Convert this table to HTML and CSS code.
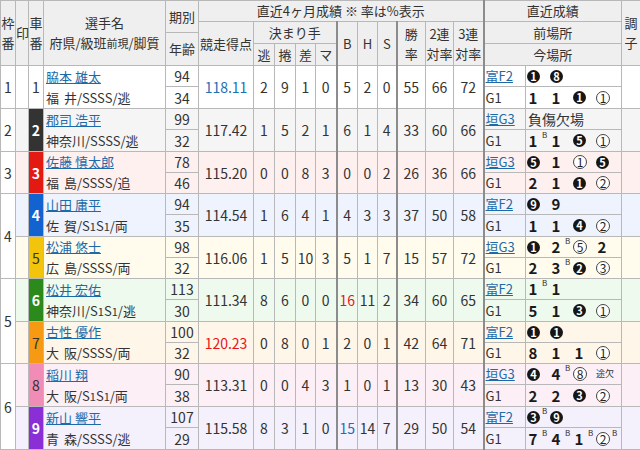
FILE: index.html
```html
<!DOCTYPE html>
<html lang="ja">
<head>
<meta charset="utf-8">
<title>出走表</title>
<link rel="stylesheet" href="styles.css">
</head>
<body>
<table class="race">
<colgroup>
<col class="w15"><col class="w13"><col class="w15"><col class="w122"><col class="w33"><col class="w55">
<col class="w21"><col class="w21"><col class="w20"><col class="w21">
<col class="w21"><col class="w20"><col class="w19">
<col class="w29"><col class="w28"><col class="w30">
<col class="w42"><col class="w96"><col class="w19">
</colgroup>
<thead>
<tr class="h1">
  <th rowspan="3">枠<br>番</th>
  <th rowspan="3">印</th>
  <th rowspan="3">車<br>番</th>
  <th rowspan="3" class="hname">選手名<br>府県/級班<span class="sm">前現</span>/脚質</th>
  <th rowspan="3" class="kb"><div class="kb1">期別</div><div class="kb2">年齢</div></th>
  <th colspan="11">直近4ヶ月成績 ※ 率は%表示</th>
  <th colspan="2" class="tl">直近成績</th>
  <th rowspan="3">調<br>子</th>
</tr>
<tr class="h2">
  <th rowspan="2">競走得点</th>
  <th colspan="4">決まり手</th>
  <th rowspan="2" class="tl">B</th>
  <th rowspan="2">H</th>
  <th rowspan="2">S</th>
  <th rowspan="2" class="tl">勝<br>率</th>
  <th rowspan="2">2連<br>対率</th>
  <th rowspan="2">3連<br>対率</th>
  <th colspan="2" class="tl">前場所</th>
</tr>
<tr class="h3">
  <th>逃</th><th>捲</th><th>差</th><th>マ</th>
  <th colspan="2" class="tl">今場所</th>
</tr>
</thead>
<tbody>
<!-- 1 -->
<tr class="r1 gtop ha">
  <td rowspan="2" class="waku">1</td>
  <td rowspan="2"></td>
  <td rowspan="2" class="car c1">1</td>
  <td rowspan="2" class="name"><div class="nm"><a href="#">脇本 雄太</a></div><div class="info">福 井/SSSS/逃</div></td>
  <td class="age">94</td>
  <td rowspan="2" class="score blue">118.11</td>
  <td rowspan="2" class="num">2</td><td rowspan="2" class="num">9</td><td rowspan="2" class="num">1</td><td rowspan="2" class="num">0</td>
  <td rowspan="2" class="num tl">5</td><td rowspan="2" class="num">2</td><td rowspan="2" class="num">0</td>
  <td rowspan="2" class="num tl">55</td><td rowspan="2" class="num">66</td><td rowspan="2" class="num">72</td>
  <td class="venue tl"><a href="#">富F2</a></td>
  <td class="res"><div class="slots"><span class="sl"><span class="cb">1</span></span><span class="sl"><span class="cb">8</span></span></div></td>
  <td rowspan="2"></td>
</tr>
<tr class="r1 hb">
  <td class="age">34</td>
  <td class="venue tl">G1</td>
  <td class="res"><div class="slots"><span class="sl"><span class="pn">1</span></span><span class="sl"><span class="pn">1</span></span><span class="sl"><span class="cb">1</span></span><span class="sl"><span class="cw">1</span></span></div></td>
</tr>
<!-- 2 -->
<tr class="r2 gtop ha">
  <td rowspan="2" class="waku">2</td>
  <td rowspan="2"></td>
  <td rowspan="2" class="car c2">2</td>
  <td rowspan="2" class="name"><div class="nm"><a href="#">郡司 浩平</a></div><div class="info">神奈川/SSSS/逃</div></td>
  <td class="age">99</td>
  <td rowspan="2" class="score">117.42</td>
  <td rowspan="2" class="num">1</td><td rowspan="2" class="num">5</td><td rowspan="2" class="num">2</td><td rowspan="2" class="num">1</td>
  <td rowspan="2" class="num tl">6</td><td rowspan="2" class="num">1</td><td rowspan="2" class="num">4</td>
  <td rowspan="2" class="num tl">33</td><td rowspan="2" class="num">60</td><td rowspan="2" class="num">66</td>
  <td class="venue tl"><a href="#">垣G3</a></td>
  <td class="res"><div class="note">負傷欠場</div></td>
  <td rowspan="2"></td>
</tr>
<tr class="r2 hb">
  <td class="age">32</td>
  <td class="venue tl">G1</td>
  <td class="res"><div class="slots"><span class="sl"><span class="pn">1</span><sup>B</sup></span><span class="sl"><span class="pn">1</span></span><span class="sl"><span class="cb">5</span></span><span class="sl"><span class="cw">1</span></span></div></td>
</tr>
<!-- 3 -->
<tr class="r3 gtop ha">
  <td rowspan="2" class="waku">3</td>
  <td rowspan="2"></td>
  <td rowspan="2" class="car c3">3</td>
  <td rowspan="2" class="name"><div class="nm"><a href="#">佐藤 慎太郎</a></div><div class="info">福 島/SSSS/追</div></td>
  <td class="age">78</td>
  <td rowspan="2" class="score">115.20</td>
  <td rowspan="2" class="num">0</td><td rowspan="2" class="num">0</td><td rowspan="2" class="num">8</td><td rowspan="2" class="num">3</td>
  <td rowspan="2" class="num tl">0</td><td rowspan="2" class="num">0</td><td rowspan="2" class="num">2</td>
  <td rowspan="2" class="num tl">26</td><td rowspan="2" class="num">36</td><td rowspan="2" class="num">66</td>
  <td class="venue tl"><a href="#">垣G3</a></td>
  <td class="res"><div class="slots"><span class="sl"><span class="cb">5</span></span><span class="sl"><span class="pn">1</span></span><span class="sl"><span class="cw">1</span></span><span class="sl"><span class="cb">5</span></span></div></td>
  <td rowspan="2"></td>
</tr>
<tr class="r3 hs">
  <td class="age">46</td>
  <td class="venue tl">G1</td>
  <td class="res"><div class="slots"><span class="sl"><span class="pn">2</span></span><span class="sl"><span class="pn">1</span></span><span class="sl"><span class="cb">1</span></span><span class="sl"><span class="cw">2</span></span></div></td>
</tr>
<!-- 4 -->
<tr class="r4 gtop ha">
  <td rowspan="4" class="waku">4</td>
  <td rowspan="2"></td>
  <td rowspan="2" class="car c4">4</td>
  <td rowspan="2" class="name"><div class="nm"><a href="#">山田 庸平</a></div><div class="info">佐 賀/S<span class="one">1</span>S<span class="one">1</span>/両</div></td>
  <td class="age">94</td>
  <td rowspan="2" class="score">114.54</td>
  <td rowspan="2" class="num">1</td><td rowspan="2" class="num">6</td><td rowspan="2" class="num">4</td><td rowspan="2" class="num">1</td>
  <td rowspan="2" class="num tl">4</td><td rowspan="2" class="num">3</td><td rowspan="2" class="num">3</td>
  <td rowspan="2" class="num tl">37</td><td rowspan="2" class="num">50</td><td rowspan="2" class="num">58</td>
  <td class="venue tl"><a href="#">富F2</a></td>
  <td class="res"><div class="slots"><span class="sl"><span class="cb">9</span></span><span class="sl"><span class="pn">9</span></span></div></td>
  <td rowspan="2"></td>
</tr>
<tr class="r4 hb">
  <td class="age">35</td>
  <td class="venue tl">G1</td>
  <td class="res"><div class="slots"><span class="sl"><span class="pn">1</span></span><span class="sl"><span class="pn">1</span></span><span class="sl"><span class="cb">4</span></span><span class="sl"><span class="cw">2</span></span></div></td>
</tr>
<!-- 5 -->
<tr class="r5 ha">
  <td rowspan="2"></td>
  <td rowspan="2" class="car c5">5</td>
  <td rowspan="2" class="name"><div class="nm"><a href="#">松浦 悠士</a></div><div class="info">広 島/SSSS/両</div></td>
  <td class="age">98</td>
  <td rowspan="2" class="score">116.06</td>
  <td rowspan="2" class="num">1</td><td rowspan="2" class="num">5</td><td rowspan="2" class="num">10</td><td rowspan="2" class="num">3</td>
  <td rowspan="2" class="num tl">5</td><td rowspan="2" class="num">1</td><td rowspan="2" class="num">7</td>
  <td rowspan="2" class="num tl">15</td><td rowspan="2" class="num">57</td><td rowspan="2" class="num">72</td>
  <td class="venue tl"><a href="#">垣G3</a></td>
  <td class="res"><div class="slots"><span class="sl"><span class="cb">1</span></span><span class="sl"><span class="pn">2</span><sup>B</sup></span><span class="sl"><span class="cw">5</span></span><span class="sl"><span class="pn">2</span></span></div></td>
  <td rowspan="2"></td>
</tr>
<tr class="r5 hs">
  <td class="age">32</td>
  <td class="venue tl">G1</td>
  <td class="res"><div class="slots"><span class="sl"><span class="pn">2</span></span><span class="sl"><span class="pn">3</span><sup>B</sup></span><span class="sl"><span class="cb">2</span></span><span class="sl"><span class="cw">3</span></span></div></td>
</tr>
<!-- 6 -->
<tr class="r6 gtop ha">
  <td rowspan="4" class="waku">5</td>
  <td rowspan="2"></td>
  <td rowspan="2" class="car c6">6</td>
  <td rowspan="2" class="name"><div class="nm"><a href="#">松井 宏佑</a></div><div class="info">神奈川/S<span class="one">1</span>S<span class="one">1</span>/逃</div></td>
  <td class="age">113</td>
  <td rowspan="2" class="score">111.34</td>
  <td rowspan="2" class="num">8</td><td rowspan="2" class="num">6</td><td rowspan="2" class="num">0</td><td rowspan="2" class="num">0</td>
  <td rowspan="2" class="num tl red">16</td><td rowspan="2" class="num">11</td><td rowspan="2" class="num">2</td>
  <td rowspan="2" class="num tl">34</td><td rowspan="2" class="num">60</td><td rowspan="2" class="num">65</td>
  <td class="venue tl"><a href="#">富F2</a></td>
  <td class="res"><div class="slots"><span class="sl"><span class="pn">1</span><sup>B</sup></span><span class="sl"><span class="pn">1</span></span></div></td>
  <td rowspan="2"></td>
</tr>
<tr class="r6 hb">
  <td class="age">30</td>
  <td class="venue tl">G1</td>
  <td class="res"><div class="slots"><span class="sl"><span class="pn">5</span></span><span class="sl"><span class="pn">1</span></span><span class="sl"><span class="cb">3</span></span><span class="sl"><span class="cw">1</span></span></div></td>
</tr>
<!-- 7 -->
<tr class="r7 ha">
  <td rowspan="2"></td>
  <td rowspan="2" class="car c7">7</td>
  <td rowspan="2" class="name"><div class="nm"><a href="#">古性 優作</a></div><div class="info">大 阪/SSSS/両</div></td>
  <td class="age">100</td>
  <td rowspan="2" class="score red">120.23</td>
  <td rowspan="2" class="num">0</td><td rowspan="2" class="num">8</td><td rowspan="2" class="num">0</td><td rowspan="2" class="num">1</td>
  <td rowspan="2" class="num tl">2</td><td rowspan="2" class="num">0</td><td rowspan="2" class="num">1</td>
  <td rowspan="2" class="num tl">42</td><td rowspan="2" class="num">64</td><td rowspan="2" class="num">71</td>
  <td class="venue tl"><a href="#">富F2</a></td>
  <td class="res"><div class="slots"><span class="sl"><span class="cb">1</span></span><span class="sl"><span class="cb">1</span></span></div></td>
  <td rowspan="2"></td>
</tr>
<tr class="r7 hs">
  <td class="age">32</td>
  <td class="venue tl">G1</td>
  <td class="res"><div class="slots"><span class="sl"><span class="pn">8</span></span><span class="sl"><span class="pn">1</span></span><span class="sl"><span class="pn">1</span></span><span class="sl"><span class="cw">1</span></span></div></td>
</tr>
<!-- 8 -->
<tr class="r8 gtop ha">
  <td rowspan="4" class="waku">6</td>
  <td rowspan="2"></td>
  <td rowspan="2" class="car c8">8</td>
  <td rowspan="2" class="name"><div class="nm"><a href="#">稲川 翔</a></div><div class="info">大 阪/S<span class="one">1</span>S<span class="one">1</span>/両</div></td>
  <td class="age">90</td>
  <td rowspan="2" class="score">113.31</td>
  <td rowspan="2" class="num">0</td><td rowspan="2" class="num">0</td><td rowspan="2" class="num">4</td><td rowspan="2" class="num">3</td>
  <td rowspan="2" class="num tl">1</td><td rowspan="2" class="num">0</td><td rowspan="2" class="num">1</td>
  <td rowspan="2" class="num tl">13</td><td rowspan="2" class="num">30</td><td rowspan="2" class="num">43</td>
  <td class="venue tl"><a href="#">垣G3</a></td>
  <td class="res"><div class="slots"><span class="sl"><span class="cb">4</span></span><span class="sl"><span class="pn">4</span><sup>B</sup></span><span class="sl"><span class="cw">8</span></span><span class="sl"><span class="tiny">途欠</span></span></div></td>
  <td rowspan="2"></td>
</tr>
<tr class="r8 hb">
  <td class="age">38</td>
  <td class="venue tl">G1</td>
  <td class="res"><div class="slots"><span class="sl"><span class="pn">2</span></span><span class="sl"><span class="pn">2</span></span><span class="sl"><span class="cb">3</span></span><span class="sl"><span class="cw">2</span></span></div></td>
</tr>
<!-- 9 -->
<tr class="r9 ha">
  <td rowspan="2"></td>
  <td rowspan="2" class="car c9">9</td>
  <td rowspan="2" class="name"><div class="nm"><a href="#">新山 響平</a></div><div class="info">青 森/SSSS/逃</div></td>
  <td class="age">107</td>
  <td rowspan="2" class="score">115.58</td>
  <td rowspan="2" class="num">8</td><td rowspan="2" class="num">3</td><td rowspan="2" class="num">1</td><td rowspan="2" class="num">0</td>
  <td rowspan="2" class="num tl blue">15</td><td rowspan="2" class="num">14</td><td rowspan="2" class="num">7</td>
  <td rowspan="2" class="num tl">29</td><td rowspan="2" class="num">50</td><td rowspan="2" class="num">54</td>
  <td class="venue tl"><a href="#">富F2</a></td>
  <td class="res"><div class="slots"><span class="sl"><span class="cb">3</span><sup>B</sup></span><span class="sl"><span class="cb">9</span></span></div></td>
  <td rowspan="2"></td>
</tr>
<tr class="r9 hb">
  <td class="age">29</td>
  <td class="venue tl">G1</td>
  <td class="res"><div class="slots"><span class="sl"><span class="pn">7</span><sup>B</sup></span><span class="sl"><span class="pn">4</span><sup>B</sup></span><span class="sl"><span class="pn">1</span><sup>B</sup></span><span class="sl"><span class="cw">2</span><sup>B</sup></span></div></td>
</tr>
</tbody>
</table>
</body>
</html>
```
FILE: styles.css
```css
* { box-sizing: border-box; }
html, body { margin: 0; padding: 0; background: #fff; }
body {
  font-family: "Noto Sans CJK JP", "Noto Sans", sans-serif;
  color: #333;
  font-size: 13px;
}
.race {
  border-collapse: collapse;
  table-layout: fixed;
  width: 640px;
}
.w13 { width: 13px; } .w15 { width: 15px; } .w19 { width: 19px; } .w20 { width: 20px; }
.w21 { width: 21px; } .w28 { width: 28px; } .w29 { width: 29px; } .w30 { width: 30px; }
.w33 { width: 33px; } .w42 { width: 42px; } .w55 { width: 55px; } .w96 { width: 96px; }
.w122 { width: 122px; }

.race th, .race td {
  border: 1px solid #b8b8b8;
  padding: 0;
  text-align: center;
  vertical-align: middle;
  font-weight: normal;
  line-height: 18px;
  white-space: nowrap;
}
.race thead th { background: #efefef; color: #333; font-size: 13px; line-height: 20px; }
.h1 { height: 20px; }
.h2 { height: 22px; }
.h3 { height: 22px; }
.sm { font-size: 11px; }
.race th.kb { padding: 0; vertical-align: top; }
.kb1 { height: 32px; line-height: 32px; border-bottom: 1px solid #b8b8b8; }
.kb2 { height: 31px; line-height: 31px; }

.race .tl { border-left: 2px solid #8c8c8c; }

.race tbody tr.ha { height: 21px; }
.race tbody tr.hb { height: 22px; }
.race tbody tr.hs { height: 21px; }
.race tbody tr.gtop td { border-top: 1px solid #8f8f8f; }
.race td { font-size: 14px; }

.r1 { background: #ffffff; }
.r2 { background: #f5f5f5; }
.r3 { background: #fff0f0; }
.r4 { background: #eef3fd; }
.r5 { background: #fffcee; }
.r6 { background: #effaee; }
.r7 { background: #fff6ea; }
.r8 { background: #fcf0f6; }
.r9 { background: #f4f0fc; }

.race td.waku { background: #fff; }

.car { font-size: 14px; }
.c1 { background: #fff; color: #333; }
.c2 { background: #333; color: #fff; }
.c3 { background: #e31a12; color: #fff; }
.c4 { background: #1262cf; color: #fff; }
.c5 { background: #f2c40c; color: #333; }
.c6 { background: #2c8a1c; color: #fff; }
.c7 { background: #f59a12; color: #333; }
.c8 { background: #f08cb6; color: #333; }
.c9 { background: #8a2fd6; color: #fff; }
.race td.c2, .race td.c3, .race td.c4, .race td.c6, .race td.c9 { font-weight: bold; }

.race td.name { text-align: left; padding-left: 2px; font-size: 13px; }
.nm, .info { height: 20px; line-height: 20px; }
.nm { margin-bottom: 1px; }
.info { word-spacing: 2px; }
.name a, .venue a { color: #1c6aa8; text-decoration: underline; }
.one { font-size: 11px; }

.red { color: #e8141a; }
.blue { color: #1c6fb5; }

.race td.venue { text-align: left; padding-left: 1px; font-size: 13px; }
.race td.res { text-align: left; padding-left: 1px; }
.slots { display: flex; align-items: center; height: 18px; }
.sl { width: 23px; height: 18px; flex: none; display: flex; align-items: center; position: relative; }
.sl sup {
  position: absolute; left: 15px; top: -1px;
  font-size: 8px; line-height: 8px; color: #333;
}
.pn { font-size: 15px; font-weight: bold; color: #1a1a1a; width: 12px; text-align: center; line-height: 18px; }
.cb {
  width: 13px; height: 13px; border-radius: 50%;
  background: #161616; color: #fff;
  font-size: 11px; font-weight: bold; line-height: 13px;
  display: inline-flex; align-items: center; justify-content: center;
}
.cw {
  width: 14px; height: 14px; border-radius: 50%;
  border: 1px solid #444; background: #fff; color: #222;
  font-size: 12px; line-height: 12px;
  display: inline-flex; align-items: center; justify-content: center;
}
.sl .cw + sup { left: 16px; }
.tiny { font-size: 9px; }
.note { font-size: 14px; padding-left: 1px; line-height: 18px; }
```
